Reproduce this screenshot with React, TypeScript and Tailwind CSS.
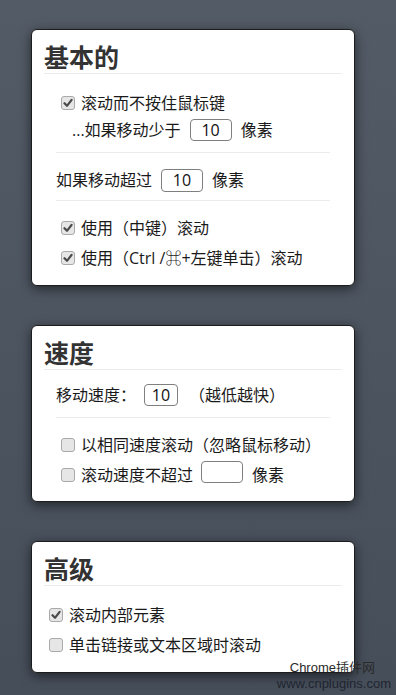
import React from "react";

function Box({ checked }: { checked?: boolean }) {
  return (
    <span className="inline-flex items-center justify-center w-[14px] h-[14px] rounded-[3px] border border-[#a9a9a9] bg-[#e6e6e6] shrink-0">
      {checked && (
        <svg width="10" height="10" viewBox="0 0 10 10">
          <path d="M1.5 5.2 L4 7.8 L8.6 1.8" fill="none" stroke="#4a4a4a" strokeWidth="2.2" strokeLinecap="round" strokeLinejoin="round" />
        </svg>
      )}
    </span>
  );
}

function Field({ value, w, h }: { value?: string; w: string; h: string }) {
  return (
    <span className={`inline-flex items-center justify-center ${w} ${h} border border-[#7f7f7f] rounded-[4px] bg-white text-[16px] text-[#111]`}>
      {value}
    </span>
  );
}

function Check({ checked, children, cls }: { checked?: boolean; children: React.ReactNode; cls: string }) {
  return (
    <div className={`flex items-center gap-[6px] h-[24px] ${cls}`}>
      <Box checked={checked} />
      <span>{children}</span>
    </div>
  );
}

function Card({ title, children, cls }: { title: string; children: React.ReactNode; cls: string }) {
  return (
    <div className={`mx-[31px] w-[324px] bg-white rounded-[6px] border border-[#1c1c1c] shadow-[0_3px_12px_rgba(0,0,0,0.55)] px-[12px] pt-[12px] ${cls}`}>
      <h2 className="h-[32px] leading-[30px] text-[25px] font-bold text-[#333] border-b border-[#ececec]">{title}</h2>
      {children}
    </div>
  );
}

export default function App() {
  return (
    <div
      className="relative h-[695px] w-full overflow-hidden bg-gradient-to-b from-[#535b66] to-[#464e5a] pt-[29px] text-[16px] text-[#1a1a1a]"
      style={{ fontFamily: '"Open Sans", "Noto Sans CJK SC", sans-serif' }}
    >
      <Card title="基本的" cls="pb-[15px]">
        <Check checked cls="mt-[17px] pl-[17px]">滚动而不按住鼠标键</Check>
        <div className="flex items-center h-[24px] mt-[3px] pl-[28px]">
          <span>...如果移动少于</span>
          <span className="ml-[9px] mr-[9px]"><Field value="10" w="w-[42px]" h="h-[22px]" /></span>
          <span>像素</span>
        </div>
        <div className="mx-[12px] mt-[10px] border-t border-[#ececec]" />
        <div className="flex items-center h-[26px] mt-[14px] pl-[12px]">
          <span>如果移动超过</span>
          <span className="ml-[9px] mr-[9px]"><Field value="10" w="w-[42px]" h="h-[23px]" /></span>
          <span>像素</span>
        </div>
        <div className="mx-[12px] mt-[7px] border-t border-[#ececec]" />
        <Check checked cls="mt-[15px] pl-[17px]">使用（中键）滚动</Check>
        <Check checked cls="mt-[6px] pl-[17px]">使用（Ctrl /⌘+左键单击）滚动</Check>
      </Card>

      <Card title="速度" cls="mt-[39px] pb-[14px]">
        <div className="flex items-center h-[24px] mt-[13px] pl-[12px]">
          <span>移动速度：</span>
          <span className="ml-[8px] mr-[11px]"><Field value="10" w="w-[34px]" h="h-[22px]" /></span>
          <span>（越低越快）</span>
        </div>
        <div className="mx-[12px] mt-[10px] border-t border-[#ececec]" />
        <Check cls="mt-[15px] pl-[17px]">以相同速度滚动（忽略鼠标移动）</Check>
        <div className="flex items-center gap-[6px] h-[24px] mt-[6px] pl-[17px]">
          <Box />
          <span>滚动速度不超过</span>
          <span className="ml-[2px] mr-[3px]"><Field w="w-[42px]" h="h-[22px]" /></span>
          <span>像素</span>
        </div>
      </Card>

      <Card title="高级" cls="mt-[39px] pb-[15px]">
        <Check checked cls="mt-[17px] pl-[5px]">滚动内部元素</Check>
        <Check cls="mt-[6px] pl-[5px]">单击链接或文本区域时滚动</Check>
      </Card>

      <div
        className="absolute right-[5px] top-[660px] whitespace-nowrap text-right leading-[16px] text-[#1f2530] text-[13px]"
        style={{ fontFamily: '"Liberation Sans", "Noto Sans CJK SC", sans-serif' }}
      >
        <div className="pr-[16px] text-[#2a2a2a]">Chrome插件网</div>
        <div>www.cnplugins.com</div>
      </div>
    </div>
  );
}
